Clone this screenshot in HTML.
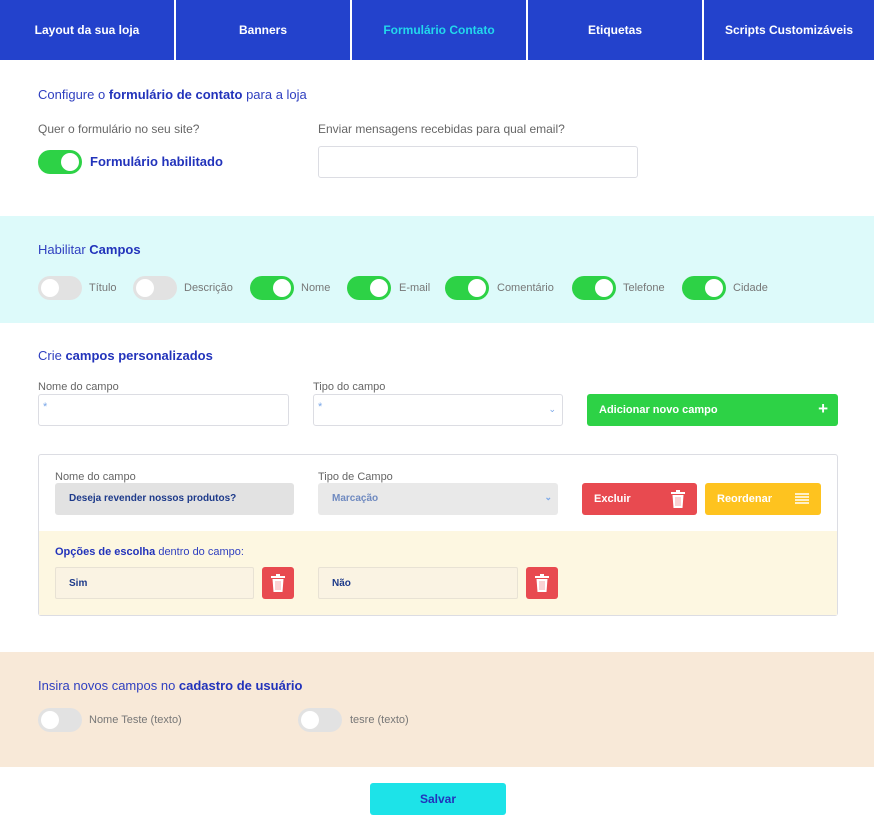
<!DOCTYPE html>
<html><head><meta charset="utf-8"><style>
*{box-sizing:border-box;margin:0;padding:0}
body{width:874px;height:820px;position:relative;font-family:"Liberation Sans",sans-serif;background:#fff;overflow:hidden}
.a{position:absolute}
.nav{left:0;top:0;width:874px;height:60px;background:#2342cc}
.tab{position:absolute;top:0;height:60px;color:#fff;font-weight:bold;font-size:12px;display:flex;align-items:center;justify-content:center}
.sep{position:absolute;top:0;width:2px;height:60px;background:#fff}
.h{font-size:13px;color:#2f3fc0}
.h b{color:#2233bb}
.lbl{font-size:12px;color:#666}
.tg{position:absolute;width:44px;height:24px;border-radius:12px;background:#e2e2e2}
.tg::after{content:"";position:absolute;top:3px;left:3px;width:18px;height:18px;border-radius:50%;background:#fff}
.tg.on{background:#2dd246}
.tg.on::after{left:23px}
.tl{position:absolute;font-size:11px;color:#777}
.inp{position:absolute;border:1px solid #dcdde3;border-radius:3px;background:#fff}
.btn{position:absolute;border-radius:3px;color:#fff;font-weight:bold;font-size:11px;display:flex;align-items:center;padding-left:12px}
.chev{position:absolute;right:6px;top:9px;font-size:9px;color:#7aa7e8}
.trash{position:absolute}
</style></head><body>
<div class="a nav">
<div class="tab" style="left:0;width:174px">Layout da sua loja</div>
<div class="sep" style="left:174px"></div>
<div class="tab" style="left:176px;width:174px">Banners</div>
<div class="sep" style="left:350px"></div>
<div class="tab" style="left:352px;width:174px;color:#22d8ec">Formulário Contato</div>
<div class="sep" style="left:526px"></div>
<div class="tab" style="left:528px;width:174px">Etiquetas</div>
<div class="sep" style="left:702px"></div>
<div class="tab" style="left:704px;width:170px">Scripts Customizáveis</div>
</div>

<div class="a h" style="left:38px;top:87px">Configure o <b>formulário de contato</b> para a loja</div>
<div class="a lbl" style="left:38px;top:122px">Quer o formulário no seu site?</div>
<div class="tg on" style="left:38px;top:150px"></div>
<div class="a" style="left:90px;top:154px;font-size:13px;font-weight:bold;color:#2233bb">Formulário habilitado</div>
<div class="a lbl" style="left:318px;top:122px">Enviar mensagens recebidas para qual email?</div>
<div class="inp" style="left:318px;top:146px;width:320px;height:32px"></div>

<div class="a" style="left:0;top:216px;width:874px;height:107px;background:#ddfafa"></div>
<div class="a h" style="left:38px;top:242px">Habilitar <b>Campos</b></div>
<div class="tg" style="left:38px;top:276px"></div><div class="tl" style="left:89px;top:282px">Título</div>
<div class="tg" style="left:133px;top:276px"></div><div class="tl" style="left:184px;top:282px">Descrição</div>
<div class="tg on" style="left:250px;top:276px"></div><div class="tl" style="left:301px;top:282px">Nome</div>
<div class="tg on" style="left:347px;top:276px"></div><div class="tl" style="left:399px;top:282px">E-mail</div>
<div class="tg on" style="left:445px;top:276px"></div><div class="tl" style="left:497px;top:282px">Comentário</div>
<div class="tg on" style="left:572px;top:276px"></div><div class="tl" style="left:623px;top:282px">Telefone</div>
<div class="tg on" style="left:682px;top:276px"></div><div class="tl" style="left:733px;top:282px">Cidade</div>

<div class="a h" style="left:38px;top:348px">Crie <b>campos personalizados</b></div>
<div class="a lbl" style="left:38px;top:381px;font-size:11px">Nome do campo</div>
<div class="inp" style="left:38px;top:394px;width:251px;height:32px"><span style="position:absolute;left:4px;top:6px;font-size:11px;color:#7aa7e8">*</span></div>
<div class="a lbl" style="left:313px;top:381px;font-size:11px">Tipo do campo</div>
<div class="inp" style="left:313px;top:394px;width:250px;height:32px"><span style="position:absolute;left:4px;top:6px;font-size:11px;color:#7aa7e8">*</span><span class="chev">&#8964;</span></div>
<div class="btn" style="left:587px;top:394px;width:251px;height:32px;background:#2dd246">Adicionar novo campo<span style="position:absolute;right:10px;top:5px;font-size:17px">+</span></div>

<div class="a" style="left:38px;top:454px;width:800px;height:162px;border:1px solid #dcdde3;border-radius:3px;background:#fff"></div>
<div class="a" style="left:39px;top:531px;width:798px;height:84px;background:#fdf7e1"></div>
<div class="a lbl" style="left:55px;top:471px;font-size:11px">Nome do campo</div>
<div class="a" style="left:55px;top:483px;width:239px;height:32px;background:#e2e2e2;border-radius:3px;font-size:10px;font-weight:bold;color:#1d3a8a;padding:10px 0 0 14px">Deseja revender nossos produtos?</div>
<div class="a lbl" style="left:318px;top:471px;font-size:11px">Tipo de Campo</div>
<div class="a" style="left:318px;top:483px;width:240px;height:32px;background:#e9e9e9;border-radius:3px;font-size:10px;font-weight:bold;color:#6f8ac0;padding:10px 0 0 14px">Marcação<span class="chev">&#8964;</span></div>
<div class="btn" style="left:582px;top:483px;width:115px;height:32px;background:#e84a50">Excluir
<svg style="position:absolute;right:12px;top:7px" width="14" height="18" viewBox="0 0 14 18"><rect x="0" y="2" width="14" height="2" fill="#fff"/><rect x="5" y="0" width="4" height="2" fill="#fff"/><path d="M1.5 5h11l-1 13h-9z" fill="#fff"/><path d="M5 7v9M7 7v9M9 7v9" stroke="#f5a5a8" stroke-width="1"/></svg></div>
<div class="btn" style="left:705px;top:483px;width:116px;height:32px;background:#fec31f">Reordenar
<svg style="position:absolute;right:12px;top:10px" width="14" height="12"><path d="M0 1h14M0 4h14M0 7h14M0 10h14" stroke="#fff" stroke-width="1.5"/></svg></div>
<div class="a" style="left:55px;top:546px;font-size:11px;color:#2f3fc0"><b style="color:#2233bb">Opções de escolha</b> dentro do campo:</div>
<div class="a" style="left:55px;top:567px;width:199px;height:32px;border:1px solid #e8e2d4;background:#faf3e3;border-radius:2px;font-size:10px;font-weight:bold;color:#1d3a8a;padding:10px 0 0 13px">Sim</div>
<div class="a" style="left:262px;top:567px;width:32px;height:32px;background:#e84a50;border-radius:3px"><svg style="position:absolute;left:9px;top:7px" width="14" height="18" viewBox="0 0 14 18"><rect x="0" y="2" width="14" height="2" fill="#fff"/><rect x="5" y="0" width="4" height="2" fill="#fff"/><path d="M1.5 5h11l-1 13h-9z" fill="#fff"/><path d="M5 7v9M7 7v9M9 7v9" stroke="#f5a5a8"/></svg></div>
<div class="a" style="left:318px;top:567px;width:200px;height:32px;border:1px solid #e8e2d4;background:#faf3e3;border-radius:2px;font-size:10px;font-weight:bold;color:#1d3a8a;padding:10px 0 0 13px">Não</div>
<div class="a" style="left:526px;top:567px;width:32px;height:32px;background:#e84a50;border-radius:3px"><svg style="position:absolute;left:9px;top:7px" width="14" height="18" viewBox="0 0 14 18"><rect x="0" y="2" width="14" height="2" fill="#fff"/><rect x="5" y="0" width="4" height="2" fill="#fff"/><path d="M1.5 5h11l-1 13h-9z" fill="#fff"/><path d="M5 7v9M7 7v9M9 7v9" stroke="#f5a5a8"/></svg></div>

<div class="a" style="left:0;top:652px;width:874px;height:115px;background:#f8e9d8"></div>
<div class="a h" style="left:38px;top:678px">Insira novos campos no <b>cadastro de usuário</b></div>
<div class="tg" style="left:38px;top:708px"></div><div class="tl" style="left:89px;top:714px">Nome Teste (texto)</div>
<div class="tg" style="left:298px;top:708px"></div><div class="tl" style="left:350px;top:714px">tesre (texto)</div>

<div class="a" style="left:370px;top:783px;width:136px;height:32px;background:#1de3e8;border-radius:3px;color:#2233bb;font-weight:bold;font-size:12px;display:flex;align-items:center;justify-content:center">Salvar</div>
</body></html>
